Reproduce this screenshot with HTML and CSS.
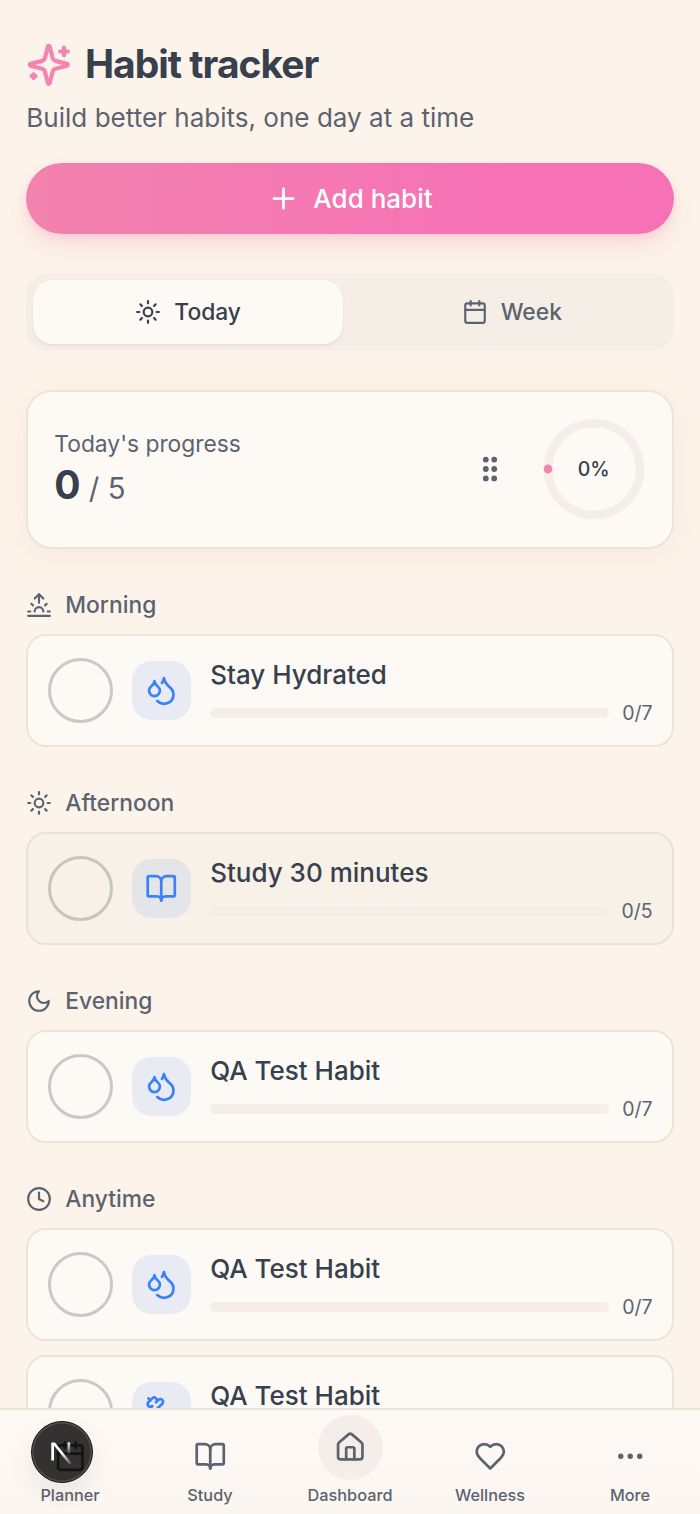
FILE: index.html
```html
<!DOCTYPE html>
<html lang="en">
<head>
<meta charset="utf-8">
<title>Habit tracker</title>
<link rel="stylesheet" href="styles.css">
</head>
<body>
<svg class="defs" aria-hidden="true">
  <symbol id="sun" viewBox="0 0 24 24"><circle cx="12" cy="12" r="4"/><path d="M12 2v2M12 20v2M4.93 4.93l1.41 1.41M17.66 17.66l1.41 1.41M2 12h2M20 12h2M6.34 17.66l-1.41 1.41M19.07 4.93l-1.41 1.41"/></symbol>
  <symbol id="calendar" viewBox="0 0 24 24"><path d="M8 2v4M16 2v4M3 10h18"/><rect width="18" height="18" x="3" y="4" rx="2"/></symbol>
  <symbol id="book" viewBox="0 0 24 24"><path d="M12 7v14"/><path d="M3 18a1 1 0 0 1-1-1V4a1 1 0 0 1 1-1h5a4 4 0 0 1 4 4 4 4 0 0 1 4-4h5a1 1 0 0 1 1 1v13a1 1 0 0 1-1 1h-6a3 3 0 0 0-3 3 3 3 0 0 0-3-3z"/></symbol>
  <symbol id="droplets" viewBox="0 0 24 24"><path d="M7 16.3c2.2 0 4-1.83 4-4.05 0-1.16-.57-2.26-1.71-3.19S7.29 6.75 7 5.3c-.29 1.45-1.14 2.84-2.29 3.76S3 11.1 3 12.25c0 2.22 1.8 4.05 4 4.05z"/><path d="M12.56 6.6A10.97 10.97 0 0 0 14 3.02c.5 2.5 2 4.9 4 6.5s3 3.5 3 5.5a6.98 6.98 0 0 1-11.91 4.97"/></symbol>
</svg>

<main class="page">
  <header class="header">
    <div class="title-row">
      <svg class="icon icon-title" viewBox="0 0 24 24"><path d="M9.937 15.5A2 2 0 0 0 8.5 14.063l-6.135-1.582a.5.5 0 0 1 0-.962L8.5 9.936A2 2 0 0 0 9.937 8.5l1.582-6.135a.5.5 0 0 1 .963 0L14.063 8.5A2 2 0 0 0 15.5 9.937l6.135 1.581a.5.5 0 0 1 0 .964L15.5 14.063a2 2 0 0 0-1.437 1.437l-1.582 6.135a.5.5 0 0 1-.963 0z"/><path d="M20 3v4M22 5h-4M4 17v2M5 18H3"/></svg>
      <h1>Habit tracker</h1>
    </div>
    <p class="subtitle">Build better habits, one day at a time</p>
  </header>

  <button class="add"><svg class="icon icon-plus" viewBox="0 0 24 24"><path d="M5 12h14M12 5v14"/></svg>Add habit</button>

  <div class="tabs">
    <button class="tab active"><svg class="icon"><use href="#sun"/></svg>Today</button>
    <button class="tab"><svg class="icon"><use href="#calendar"/></svg>Week</button>
  </div>

  <section class="progress">
    <div class="progress-copy">
      <p class="progress-label">Today's progress</p>
      <p class="progress-count"><strong>0</strong> / 5</p>
    </div>
    <svg class="grip" viewBox="0 0 16 26"><circle cx="3.8" cy="3.6" r="2.9"/><circle cx="12.2" cy="3.6" r="2.9"/><circle cx="3.8" cy="13" r="2.9"/><circle cx="12.2" cy="13" r="2.9"/><circle cx="3.8" cy="22.4" r="2.9"/><circle cx="12.2" cy="22.4" r="2.9"/></svg>
    <div class="ring">
      <svg class="ring-art" viewBox="0 0 104 104"><circle class="ring-track" cx="52" cy="52" r="46"/><circle class="ring-dot" cx="6" cy="52" r="4.4"/></svg>
      <span>0%</span>
    </div>
  </section>

  <section class="group">
    <h2><svg class="icon" viewBox="0 0 24 24"><path d="M12 2v8M4.93 10.93l1.41 1.41M2 18h2M20 18h2M19.07 10.93l-1.41 1.41M22 22H2M8 6l4-4 4 4M16 18a4 4 0 0 0-8 0"/></svg>Morning</h2>
    <article class="habit">
      <span class="check"></span>
      <span class="tile"><svg class="icon"><use href="#droplets"/></svg></span>
      <div class="habit-body"><h3>Stay Hydrated</h3><div class="meter"><span class="bar"></span><span class="count">0/7</span></div></div>
    </article>
  </section>

  <section class="group">
    <h2><svg class="icon"><use href="#sun"/></svg>Afternoon</h2>
    <article class="habit rest">
      <span class="check"></span>
      <span class="tile"><svg class="icon"><use href="#book"/></svg></span>
      <div class="habit-body"><h3>Study 30 minutes</h3><div class="meter"><span class="bar"></span><span class="count">0/5</span></div></div>
    </article>
  </section>

  <section class="group">
    <h2><svg class="icon" viewBox="0 0 24 24"><path d="M12 3a6 6 0 0 0 9 9 9 9 0 1 1-9-9Z"/></svg>Evening</h2>
    <article class="habit">
      <span class="check"></span>
      <span class="tile"><svg class="icon"><use href="#droplets"/></svg></span>
      <div class="habit-body"><h3>QA Test Habit</h3><div class="meter"><span class="bar"></span><span class="count">0/7</span></div></div>
    </article>
  </section>

  <section class="group">
    <h2><svg class="icon" viewBox="0 0 24 24"><circle cx="12" cy="12" r="10"/><path d="M12 6v6l4 2"/></svg>Anytime</h2>
    <article class="habit">
      <span class="check"></span>
      <span class="tile"><svg class="icon"><use href="#droplets"/></svg></span>
      <div class="habit-body"><h3>QA Test Habit</h3><div class="meter"><span class="bar"></span><span class="count">0/7</span></div></div>
    </article>
    <article class="habit">
      <span class="check"></span>
      <span class="tile"><svg class="icon" viewBox="0 0 24 24"><path d="M14.4 14.4 9.6 9.6"/><path d="M18.657 21.485a2 2 0 1 1-2.829-2.828l-1.767 1.768a2 2 0 1 1-2.829-2.829l6.364-6.364a2 2 0 1 1 2.829 2.829l-1.768 1.767a2 2 0 1 1 2.828 2.829z"/><path d="m21.5 21.5-1.4-1.4M3.9 3.9 2.5 2.5"/><path d="M6.404 12.768a2 2 0 1 1-2.829-2.829l1.768-1.767a2 2 0 1 1-2.828-2.829l2.828-2.828a2 2 0 1 1 2.829 2.828l1.767-1.768a2 2 0 1 1 2.829 2.829z"/></svg></span>
      <div class="habit-body"><h3>QA Test Habit</h3><div class="meter"><span class="bar"></span><span class="count">0/7</span></div></div>
    </article>
  </section>
</main>

<nav class="nav">
  <a class="nav-item"><span class="nav-icon"><svg class="icon"><use href="#calendar"/></svg></span>Planner</a>
  <a class="nav-item"><span class="nav-icon"><svg class="icon"><use href="#book"/></svg></span>Study</a>
  <a class="nav-item"><span class="nav-icon home"><svg class="icon" viewBox="0 0 24 24"><path d="M15 21v-8a1 1 0 0 0-1-1h-4a1 1 0 0 0-1 1v8"/><path d="M3 10a2 2 0 0 1 .709-1.528l7-5.999a2 2 0 0 1 2.582 0l7 5.999A2 2 0 0 1 21 10v9a2 2 0 0 1-2 2H5a2 2 0 0 1-2-2z"/></svg></span>Dashboard</a>
  <a class="nav-item"><span class="nav-icon"><svg class="icon" viewBox="0 0 24 24"><path d="M19 14c1.49-1.46 3-3.21 3-5.5A5.5 5.5 0 0 0 16.5 3c-1.76 0-3 .5-4.5 2-1.5-1.5-2.74-2-4.5-2A5.5 5.5 0 0 0 2 8.5c0 2.3 1.5 4.05 3 5.5l7 7Z"/></svg></span>Wellness</a>
  <a class="nav-item"><span class="nav-icon"><svg class="icon" viewBox="0 0 24 24"><circle cx="5" cy="12" r="1"/><circle cx="12" cy="12" r="1"/><circle cx="19" cy="12" r="1"/></svg></span>More</a>
</nav>

<div class="dev-badge">
  <svg viewBox="0 0 59 59">
    <defs>
      <linearGradient id="fadeDiagonal" x1="30" y1="31" x2="39" y2="43" gradientUnits="userSpaceOnUse"><stop offset="0" stop-color="#fff"/><stop offset="1" stop-color="#fff" stop-opacity="0.1"/></linearGradient>
      <linearGradient id="fadeStem" x1="37" y1="20" x2="37" y2="33" gradientUnits="userSpaceOnUse"><stop offset="0" stop-color="#fff"/><stop offset="1" stop-color="#fff" stop-opacity="0"/></linearGradient>
    </defs>
    <path d="M19.3 20.5h3.6L39.7 41.2l-2.2 1.6L22 23.6v15h-2.7z" fill="url(#fadeDiagonal)"/>
    <rect x="35.5" y="20.5" width="2.7" height="12.5" fill="url(#fadeStem)"/>
  </svg>
</div>
</body>
</html>
```

FILE: styles.css
```css
* { box-sizing: border-box; }

html, body { height: 1514px; overflow: hidden; }

body {
  margin: 0;
  background: #fcf4ea;
  color: #383f4d;
  font-family: Inter, "Liberation Sans", sans-serif;
}

h1, h2, h3, p { margin: 0; }

button { border: 0; font: inherit; }

.defs { position: absolute; width: 0; height: 0; }

.icon {
  width: 26px;
  height: 26px;
  flex: none;
  fill: none;
  stroke: currentColor;
  stroke-width: 2;
  stroke-linecap: round;
  stroke-linejoin: round;
}

.page { padding: 39px 26.4px 0 26.3px; }

.title-row { display: flex; align-items: center; gap: 13px; height: 52px; }

.icon-title { width: 45.6px; height: 45.6px; color: #f484b1; stroke-width: 2.2; }

h1 { padding-bottom: 2px; font-size: 39px; line-height: 50px; font-weight: 700; letter-spacing: -1px; }

.subtitle { margin-top: 6px; font-size: 26.05px; line-height: 42px; color: #5c6370; }

.add {
  display: flex;
  align-items: center;
  justify-content: center;
  gap: 13px;
  width: 100%;
  height: 71.4px;
  margin-top: 23.8px;
  border-radius: 36px;
  background: linear-gradient(90deg, #f282ae, #f671b5 75%);
  box-shadow: 0 13px 26px rgba(244, 114, 160, .16), 0 4px 9px rgba(244, 114, 160, .16);
  color: #fff;
  font-size: 26px;
  font-weight: 500;
}

.icon-plus { width: 33px; height: 33px; }

.tabs {
  display: grid;
  grid-template-columns: 1fr 1fr;
  gap: 13px;
  height: 77.6px;
  margin-top: 39px;
  padding: 6.5px;
  border-radius: 22px;
  background: #f5eee7;
}

.tab {
  display: flex;
  align-items: center;
  justify-content: center;
  gap: 13px;
  border-radius: 20px;
  background: none;
  color: #5c6370;
  font-size: 22.8px;
  font-weight: 500;
}

.tab.active {
  background: #fdfaf5;
  color: #383f4d;
  box-shadow: 0 1.6px 3px rgba(80, 60, 50, .09);
}

.progress {
  display: flex;
  align-items: center;
  height: 159px;
  margin-top: 39px;
  padding: 0 26px;
  border: 2px solid #ede4d9;
  border-radius: 26px;
  background: #fdfaf5;
  box-shadow: 0 6px 32px rgba(242, 150, 150, .13);
}

.progress-copy { flex: 1; }
.progress-label { margin-bottom: 2px; font-size: 22.8px; line-height: 32px; color: #5c6370; }
.progress-count { font-size: 29.3px; line-height: 45px; color: #5c6370; }
.progress-count strong { color: #383f4d; font-size: 39px; font-weight: 700; }

.grip { width: 16px; height: 26px; margin-right: 44px; fill: #5c6370; }

.ring { display: grid; width: 104px; height: 104px; place-items: center; font-size: 19.5px; font-weight: 500; }
.ring > * { grid-area: 1 / 1; }
.ring-art { width: 104px; height: 104px; }
.ring-track { fill: none; stroke: #f5eee8; stroke-width: 8.5; }
.ring-dot { fill: #f283b0; }

.group { display: flex; flex-direction: column; gap: 14px; padding-top: 39.6px; }

h2 {
  display: flex;
  align-items: center;
  gap: 13px;
  height: 32.4px;
  color: #5c6370;
  font-size: 22.8px;
  font-weight: 500;
}

h2 + .habit { margin-top: -.8px; }

.habit {
  display: flex;
  align-items: center;
  gap: 19.5px;
  height: 113px;
  padding: 0 19px 0 19.3px;
  border: 2px solid #ede4d9;
  border-radius: 20px;
  background: #fdfaf5;
}

.group + .group { padding-top: 39.4px; }

.habit.rest { background: #f8f1e7; border-color: #ebe2d6; }

.check { flex: none; width: 65px; height: 65px; border: 3.2px solid #c9c9c9; border-radius: 50%; }

.tile {
  display: grid;
  flex: none;
  width: 58.6px;
  height: 58.6px;
  place-items: center;
  border-radius: 19.5px;
  background: #e8ebf4;
  color: #3b82f6;
}

.tile .icon { width: 32.5px; height: 32.5px; }
.rest .tile { background: #e3e5e9; }
.rest .check { border-color: #c6c5c3; }

.habit-body { flex: 1; padding-top: 2px; }
h3 { font-size: 26px; line-height: 39px; font-weight: 500; }

.meter { display: flex; align-items: center; gap: 13px; margin-top: 5px; }
.bar { flex: 1; height: 10px; border-radius: 5px; background: #f5eee7; }
.rest .bar { background: #f5ede6; }
.count { font-size: 19.5px; line-height: 29px; color: #5c6370; }

.nav {
  position: fixed;
  inset: auto 0 0;
  display: grid;
  grid-template-columns: repeat(5, 1fr);
  height: 106px;
  border-top: 2px solid #ebe3da;
  background: linear-gradient(#fdf9f4, #fcf6f1);
}

.nav-item {
  display: flex;
  flex-direction: column;
  align-items: center;
  justify-content: flex-end;
  gap: 6px;
  padding-bottom: 6px;
  color: #5c6370;
  font-size: 16.3px;
  line-height: 26px;
  font-weight: 500;
}

.nav-icon { display: grid; height: 39px; place-items: center; }
.nav-icon .icon { width: 32.5px; height: 32.5px; }
.nav-icon.home { width: 65px; height: 65px; margin-bottom: -4px; border-radius: 50%; background: #f5eee8; }

.dev-badge {
  position: fixed;
  left: 31px;
  top: 1421px;
  width: 62px;
  height: 62px;
  border: 1.5px solid #171717;
  border-radius: 50%;
  background: rgba(0, 0, 0, .8);
  box-shadow: inset 0 0 0 1.5px #50504e, 0 12px 28px rgba(0, 0, 0, .07);
}

.dev-badge svg { display: block; width: 59px; height: 59px; }
```
